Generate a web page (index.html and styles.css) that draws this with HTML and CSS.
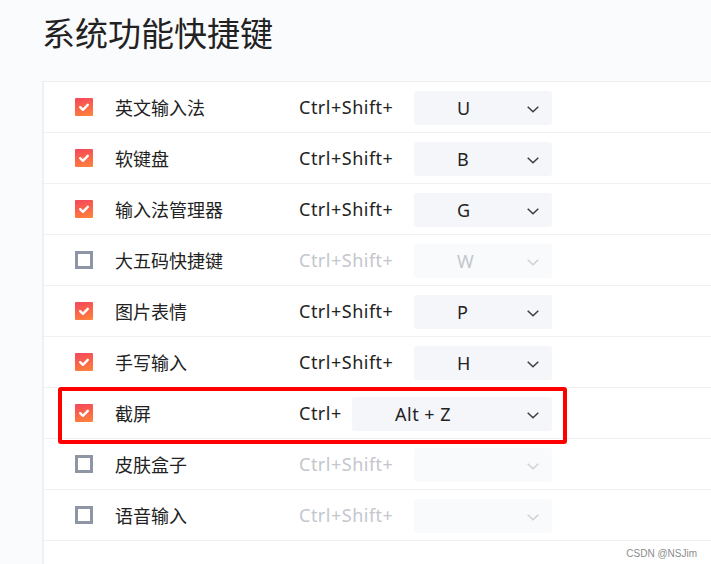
FILE: index.html
```html
<!DOCTYPE html>
<html lang="zh-CN">
<head>
<meta charset="utf-8">
<title>系统功能快捷键</title>
<link rel="stylesheet" href="styles.css">
</head>
<body>
<h1 class="title">系统功能快捷键</h1>
<div class="panel">
  <div class="row">
    <span class="check on"><svg viewBox="0 0 18 18"><path d="M5.2 9.2 L7.9 11.8 L12.8 6.8" /></svg></span>
    <span class="label">英文输入法</span>
    <div class="keys"><span class="mod">Ctrl+Shift+</span><div class="select"><span class="val">U</span><svg class="chev" viewBox="0 0 12 7"><path d="M0.7 0.7 L6 5.8 L11.3 0.7"/></svg></div></div>
  </div>
  <div class="row">
    <span class="check on"><svg viewBox="0 0 18 18"><path d="M5.2 9.2 L7.9 11.8 L12.8 6.8" /></svg></span>
    <span class="label">软键盘</span>
    <div class="keys"><span class="mod">Ctrl+Shift+</span><div class="select"><span class="val">B</span><svg class="chev" viewBox="0 0 12 7"><path d="M0.7 0.7 L6 5.8 L11.3 0.7"/></svg></div></div>
  </div>
  <div class="row">
    <span class="check on"><svg viewBox="0 0 18 18"><path d="M5.2 9.2 L7.9 11.8 L12.8 6.8" /></svg></span>
    <span class="label">输入法管理器</span>
    <div class="keys"><span class="mod">Ctrl+Shift+</span><div class="select"><span class="val">G</span><svg class="chev" viewBox="0 0 12 7"><path d="M0.7 0.7 L6 5.8 L11.3 0.7"/></svg></div></div>
  </div>
  <div class="row off">
    <span class="check"></span>
    <span class="label">大五码快捷键</span>
    <div class="keys"><span class="mod">Ctrl+Shift+</span><div class="select"><span class="val">W</span><svg class="chev" viewBox="0 0 12 7"><path d="M0.7 0.7 L6 5.8 L11.3 0.7"/></svg></div></div>
  </div>
  <div class="row">
    <span class="check on"><svg viewBox="0 0 18 18"><path d="M5.2 9.2 L7.9 11.8 L12.8 6.8" /></svg></span>
    <span class="label">图片表情</span>
    <div class="keys"><span class="mod">Ctrl+Shift+</span><div class="select"><span class="val">P</span><svg class="chev" viewBox="0 0 12 7"><path d="M0.7 0.7 L6 5.8 L11.3 0.7"/></svg></div></div>
  </div>
  <div class="row">
    <span class="check on"><svg viewBox="0 0 18 18"><path d="M5.2 9.2 L7.9 11.8 L12.8 6.8" /></svg></span>
    <span class="label">手写输入</span>
    <div class="keys"><span class="mod">Ctrl+Shift+</span><div class="select"><span class="val">H</span><svg class="chev" viewBox="0 0 12 7"><path d="M0.7 0.7 L6 5.8 L11.3 0.7"/></svg></div></div>
  </div>
  <div class="row marked">
    <span class="check on"><svg viewBox="0 0 18 18"><path d="M5.2 9.2 L7.9 11.8 L12.8 6.8" /></svg></span>
    <span class="label">截屏</span>
    <div class="keys"><span class="mod">Ctrl+</span><div class="select wide"><span class="val">Alt + Z</span><svg class="chev" viewBox="0 0 12 7"><path d="M0.7 0.7 L6 5.8 L11.3 0.7"/></svg></div></div>
    <div class="highlight"></div>
  </div>
  <div class="row off">
    <span class="check"></span>
    <span class="label">皮肤盒子</span>
    <div class="keys"><span class="mod">Ctrl+Shift+</span><div class="select"><span class="val"></span><svg class="chev" viewBox="0 0 12 7"><path d="M0.7 0.7 L6 5.8 L11.3 0.7"/></svg></div></div>
  </div>
  <div class="row off">
    <span class="check"></span>
    <span class="label">语音输入</span>
    <div class="keys"><span class="mod">Ctrl+Shift+</span><div class="select"><span class="val"></span><svg class="chev" viewBox="0 0 12 7"><path d="M0.7 0.7 L6 5.8 L11.3 0.7"/></svg></div></div>
  </div>
</div>
<div class="watermark">CSDN @NSJim</div>
</body>
</html>
```

FILE: styles.css
```css
html, body {
  height: 100%;
}
body {
  margin: 0;
  background: #fafbfd;
  font-family: "Noto Sans", "Noto Sans CJK SC", sans-serif;
  color: #222;
  display: flex;
  flex-direction: column;
  overflow: hidden;
  position: relative;
}
.title {
  margin: 0;
  height: 81px;
  box-sizing: border-box;
  padding: 11px 0 0 42px;
  font-family: "Noto Sans CJK SC", sans-serif;
  font-size: 33px;
  line-height: 42px;
  font-weight: 400;
  color: #222;
}
.panel {
  flex: 1;
  margin-left: 42px;
  background: #fff;
  border-left: 2px solid #edf0f4;
  border-top: 1px solid #eceef1;
}
.row {
  position: relative;
  height: 50px;
  border-bottom: 1px solid #eff1f4;
  display: flex;
  align-items: center;
}
.check {
  width: 18px;
  height: 18px;
  margin-left: 31px;
  box-sizing: border-box;
  border: 3px solid #8e95a4;
  background: #fff;
  flex: none;
}
.check.on {
  border: none;
  border-radius: 1px;
  background: linear-gradient(165deg, #f4465e 0%, #fa6449 50%, #ff853c 100%);
}
.check svg {
  display: block;
  width: 18px;
  height: 18px;
}
.check path {
  fill: none;
  stroke: #fff;
  stroke-width: 2.4;
  stroke-linecap: round;
  stroke-linejoin: round;
}
.label {
  width: 184px;
  margin-left: 22px;
  font-family: "Noto Sans CJK SC", sans-serif;
  font-size: 18px;
  color: #222;
  flex: none;
}
.keys {
  width: 253px;
  display: flex;
  justify-content: space-between;
  align-items: center;
}
.mod {
  font-size: 18px;
  letter-spacing: 0.5px;
  color: #222;
}
.select {
  width: 138px;
  height: 34px;
  box-sizing: border-box;
  margin-top: 2px;
  background: #f4f6fa;
  border-radius: 3px;
  display: flex;
  align-items: center;
  padding: 0 13px 0 43px;
}
.select.wide {
  width: 200px;
}
.val {
  font-size: 18px;
  color: #222;
  letter-spacing: 0.5px;
}
.chev {
  margin-left: auto;
  width: 12px;
  height: 7px;
  margin-top: 2px;
}
.chev path {
  fill: none;
  stroke: #3a3d44;
  stroke-width: 1.5;
}
.row.off .mod,
.row.off .val {
  color: #c3c6cd;
}
.row.off .select {
  background: #f9fafc;
}
.row.off .chev path {
  stroke: #cdd0d6;
}
.highlight {
  position: absolute;
  left: 14px;
  top: -1px;
  width: 509px;
  height: 57px;
  box-sizing: border-box;
  border: 4px solid #ff0000;
  border-radius: 3px;
  pointer-events: none;
}
.watermark {
  position: absolute;
  right: 14px;
  bottom: 5px;
  font-family: "Liberation Sans", sans-serif;
  font-size: 10px;
  color: #8c8c8c;
}
```
